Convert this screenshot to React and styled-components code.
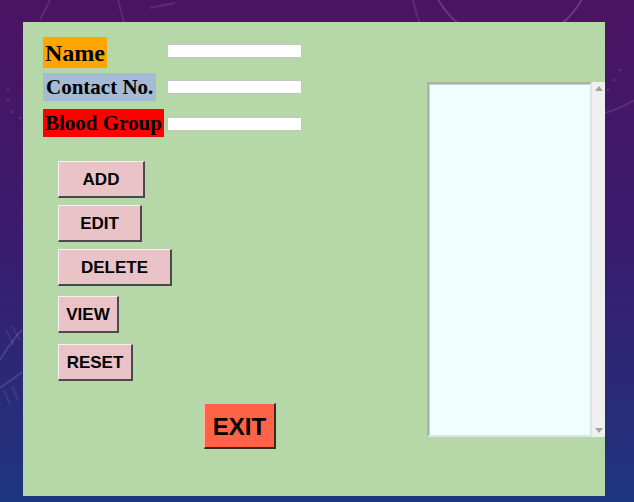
import React from 'react';
import styled, { createGlobalStyle } from 'styled-components';

const GlobalStyle = createGlobalStyle`
  html, body {
    margin: 0;
    padding: 0;
  }
  body {
    background: linear-gradient(180deg, #4b1463 0%, #3c1a6c 45%, #1d3580 100%);
    min-height: 502px;
    overflow: hidden;
  }
`;

const Backdrop = styled.div`
  position: relative;
  width: 634px;
  height: 502px;
  box-sizing: border-box;
  padding: 22px 29px 6px 23px;
`;

const Decor = styled.svg`
  position: absolute;
  left: 0;
  top: 0;
  width: 634px;
  height: 502px;
  pointer-events: none;
`;

const Panel = styled.div`
  position: relative;
  width: 582px;
  height: 474px;
  background-color: #b6d7a8;
  display: grid;
  grid-template-columns: 384px 178px;
  padding-left: 20px;
  box-sizing: border-box;
`;

const LeftColumn = styled.div`
  display: flex;
  flex-direction: column;
  padding-top: 15px;
`;

const Form = styled.div`
  display: grid;
  grid-template-columns: 124px 135px;
  grid-auto-rows: 36px;
  align-items: start;
`;

const Label = styled.div`
  justify-self: start;
  background-color: ${(p) => p.$bg};
  font-family: "Liberation Serif", "Times New Roman", serif;
  font-weight: bold;
  font-size: ${(p) => p.$size}px;
  line-height: ${(p) => p.$height + 1}px;
  height: ${(p) => p.$height}px;
  padding: 0 ${(p) => p.$pad}px;
  color: #000;
  white-space: nowrap;
`;

const TextInput = styled.input`
  box-sizing: border-box;
  width: 135px;
  height: 14px;
  margin: ${(p) => p.$top}px 0 0;
  padding: 0 2px;
  border: 1px solid #c4c4c4;
  background: #fff;
  outline: none;
`;

const ButtonStack = styled.div`
  display: flex;
  flex-direction: column;
  align-items: flex-start;
  margin: 16px 0 0 15px;
`;

const ActionButton = styled.button`
  box-sizing: border-box;
  width: ${(p) => p.$width}px;
  height: 37px;
  margin-top: ${(p) => p.$top || 0}px;
  padding: 2px 0 0;
  background-color: #e9c3c8;
  border-style: solid;
  border-width: 1px 2px 2px 1px;
  border-color: #f6eef0 #4a4a4a #4a4a4a #f6eef0;
  font-family: "Liberation Sans", Arial, sans-serif;
  font-weight: bold;
  font-size: 17px;
  color: #000;
  cursor: pointer;
`;

const ExitButton = styled.button`
  box-sizing: border-box;
  width: 72px;
  height: 46px;
  margin: 22px 0 0 161px;
  padding: 2px 0 0;
  background-color: #ff6347;
  border-style: solid;
  border-width: 1px 2px 2px 1px;
  border-color: #ffb3a3 #3d2a25 #3d2a25 #ffb3a3;
  font-family: "Liberation Sans", Arial, sans-serif;
  font-weight: bold;
  font-size: 24px;
  color: #000;
  cursor: pointer;
`;

const RightColumn = styled.div`
  padding-top: 60px;
`;

const ListWrap = styled.div`
  display: flex;
  height: 355px;
`;

const ListArea = styled.div`
  box-sizing: border-box;
  width: 165px;
  height: 100%;
  background-color: #f0fffe;
  border: 2px solid;
  border-color: #a9b3ab #dfe6df #dfe6df #a9b3ab;
  box-shadow: inset 1px 1px 0 #c9cfc9;
`;

const ScrollBar = styled.div`
  width: 13px;
  height: 100%;
  background-color: #efefef;
  display: flex;
  flex-direction: column;
  justify-content: space-between;
  align-items: center;
  padding: 4px 0;
  box-sizing: border-box;
`;

const Arrow = styled.div`
  width: 0;
  height: 0;
  border-left: 4px solid transparent;
  border-right: 4px solid transparent;
  ${(p) => (p.$up ? 'border-bottom: 5px solid #a3a3a3;' : 'border-top: 5px solid #a3a3a3;')}
`;

const fields = [
  { label: 'Name', bg: '#ffa500', size: 24, height: 31, pad: 2, top: 7 },
  { label: 'Contact No.', bg: '#a4bbd3', size: 21, height: 28, pad: 3, top: 7 },
  { label: 'Blood Group', bg: '#ff0000', size: 21, height: 28, pad: 2, top: 8 },
];

const buttons = [
  { text: 'ADD', width: 87, top: 0 },
  { text: 'EDIT', width: 84, top: 7 },
  { text: 'DELETE', width: 114, top: 7 },
  { text: 'VIEW', width: 61, top: 10 },
  { text: 'RESET', width: 75, top: 11 },
];

const App = () => {
  return (
    <>
      <GlobalStyle />
      <Backdrop>
        <Decor viewBox="0 0 634 502">
          <g fill="none" stroke="#ffffff" strokeOpacity="0.16" strokeWidth="2">
            <circle cx="510" cy="-40" r="82" />
            <circle cx="560" cy="-30" r="150" strokeOpacity="0.1" />
            <path d="M50 0 L40 20 M118 0 L124 22 M150 8 L175 3" strokeOpacity="0.1" />
            <path d="M0 360 Q12 340 22 330" strokeOpacity="0.12" />
            <path d="M0 388 Q12 380 22 372" strokeOpacity="0.12" />
            <path d="M6 330 L14 345 M12 326 L20 340 M4 390 L10 405 M12 386 L18 400" strokeOpacity="0.08" />
          </g>
          <g fill="#ffffff" fillOpacity="0.1">
            <circle cx="8" cy="90" r="1.5" />
            <circle cx="8" cy="100" r="1.5" />
            <circle cx="12" cy="112" r="1.5" />
            <circle cx="20" cy="118" r="1.5" />
            <circle cx="620" cy="70" r="1.5" />
            <circle cx="614" cy="80" r="1.5" />
            <circle cx="608" cy="90" r="1.5" />
          </g>
        </Decor>
        <Panel>
          <LeftColumn>
            <Form>
              {fields.map((f) => (
                <React.Fragment key={f.label}>
                  <Label $bg={f.bg} $size={f.size} $height={f.height} $pad={f.pad}>
                    {f.label}
                  </Label>
                  <TextInput $top={f.top} />
                </React.Fragment>
              ))}
            </Form>
            <ButtonStack>
              {buttons.map((b) => (
                <ActionButton key={b.text} $width={b.width} $top={b.top}>
                  {b.text}
                </ActionButton>
              ))}
            </ButtonStack>
            <ExitButton>EXIT</ExitButton>
          </LeftColumn>
          <RightColumn>
            <ListWrap>
              <ListArea />
              <ScrollBar>
                <Arrow $up />
                <Arrow />
              </ScrollBar>
            </ListWrap>
          </RightColumn>
        </Panel>
      </Backdrop>
    </>
  );
};

export default App;
